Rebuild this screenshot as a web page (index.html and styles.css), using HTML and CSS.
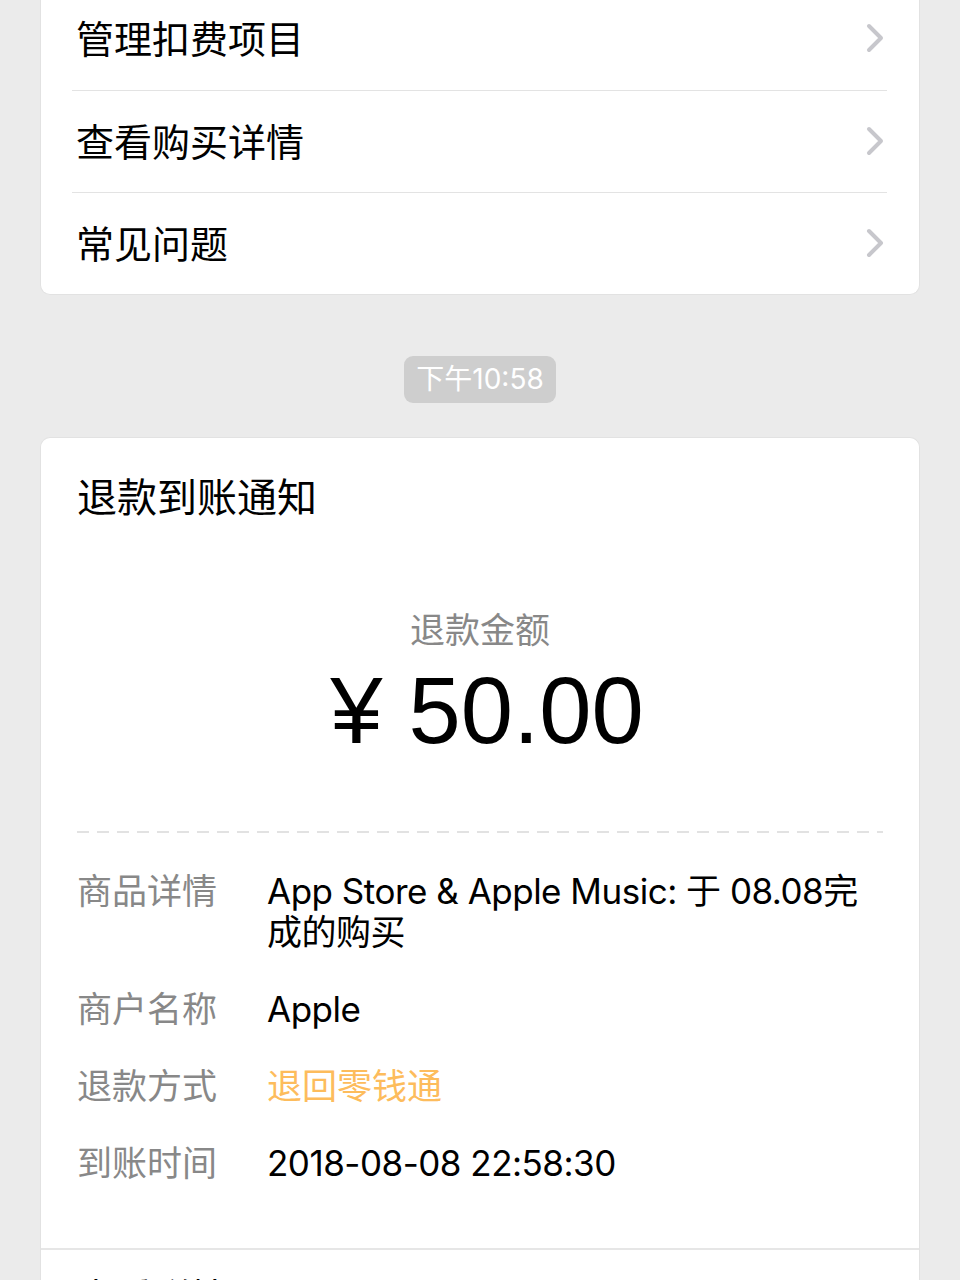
FILE: index.html
```html
<!DOCTYPE html>
<html lang="zh-CN">
<head>
<meta charset="utf-8">
<title>退款到账通知</title>
<link rel="stylesheet" href="styles.css">
</head>
<body>
<div class="page">
  <div class="card menu">
    <div class="menu-row">
      <span class="menu-text">管理扣费项目</span>
      <svg class="chev" width="20" height="30" viewBox="0 0 20 30"><path d="M3 3 L15 15 L3 27" fill="none" stroke="#c7c7cc" stroke-width="4" stroke-linecap="round" stroke-linejoin="round"/></svg>
    </div>
    <div class="divider"></div>
    <div class="menu-row">
      <span class="menu-text">查看购买详情</span>
      <svg class="chev" width="20" height="30" viewBox="0 0 20 30"><path d="M3 3 L15 15 L3 27" fill="none" stroke="#c7c7cc" stroke-width="4" stroke-linecap="round" stroke-linejoin="round"/></svg>
    </div>
    <div class="divider"></div>
    <div class="menu-row">
      <span class="menu-text">常见问题</span>
      <svg class="chev" width="20" height="30" viewBox="0 0 20 30"><path d="M3 3 L15 15 L3 27" fill="none" stroke="#c7c7cc" stroke-width="4" stroke-linecap="round" stroke-linejoin="round"/></svg>
    </div>
  </div>

  <div class="time-wrap"><span class="time">下午10:58</span></div>

  <div class="card notice">
    <div class="notice-body">
      <div class="notice-title">退款到账通知</div>
      <div class="amount-label">退款金额</div>
      <div class="amount">¥ 50.00</div>
      <div class="dash"></div>
      <div class="detail">
        <div class="d-label">商品详情</div>
        <div class="d-value">App Store &amp; Apple Music: 于 08.08完成的购买</div>
      </div>
      <div class="detail">
        <div class="d-label">商户名称</div>
        <div class="d-value">Apple</div>
      </div>
      <div class="detail">
        <div class="d-label">退款方式</div>
        <div class="d-value orange">退回零钱通</div>
      </div>
      <div class="detail">
        <div class="d-label">到账时间</div>
        <div class="d-value">2018-08-08 22:58:30</div>
      </div>
    </div>
    <div class="foot">查看详情</div>
  </div>
</div>
</body>
</html>
```

FILE: styles.css
```css
html, body {
  margin: 0;
  padding: 0;
  background: #ebebeb;
  height: 1280px;
  overflow: hidden;
}
body {
  font-family: "Inter", "Noto Sans CJK SC", sans-serif;
  color: #000;
}
.page {
  padding: 0 40px;
}
.card {
  background: #fff;
  border: 1px solid #e2e2e2;
  border-radius: 10px;
}
.menu {
  margin-top: -12px;
  border-top: none;
}
.menu-row {
  height: 101px;
  display: flex;
  align-items: center;
  justify-content: space-between;
  padding: 0 33px 0 35px;
}
.menu-row:first-child {
  height: 102px;
}
.menu-text {
  font-size: 38px;
  line-height: 46px;
}
.chev {
  display: block;
  margin-top: -2px;
}
.divider {
  height: 1px;
  background: #e3e3e3;
  margin: 0 32px 0 31px;
}
.time-wrap {
  display: flex;
  justify-content: center;
  padding: 61px 0 34px;
}
.time {
  background: #cecece;
  color: #fff;
  border-radius: 9px;
  font-size: 28px;
  line-height: 47px;
  padding: 0 12px;
}
.notice {
  border-bottom: none;
  border-radius: 10px 10px 0 0;
  height: 900px;
}
.notice-body {
  padding: 37px 36px 64px;
}
.notice-title {
  font-size: 40px;
  line-height: 46px;
}
.amount-label {
  margin-top: 87px;
  text-align: center;
  font-size: 35px;
  line-height: 44px;
  color: #888;
}
.amount {
  margin-top: 4px;
  text-align: center;
  font-family: "Liberation Sans", sans-serif;
  font-size: 94px;
  line-height: 110px;
  padding-left: 14px;
}
.dash {
  margin-top: 65px;
  height: 2px;
  background-image: repeating-linear-gradient(to right, #e2e2e2 0 12px, transparent 12px 20px);
}
.detail {
  display: flex;
  margin-top: 36px;
  font-size: 35px;
  line-height: 41px;
}
.dash + .detail {
  margin-top: 38px;
}
.d-label {
  width: 190px;
  flex: none;
  color: #888;
}
.d-value {
  flex: 1;
  letter-spacing: -0.5px;
}
.orange {
  color: #fdbc5c;
  letter-spacing: 0;
}
.foot {
  border-top: 2px solid #e6e6e6;
  padding: 24px 36px;
  font-size: 38px;
  line-height: 46px;
}
```
